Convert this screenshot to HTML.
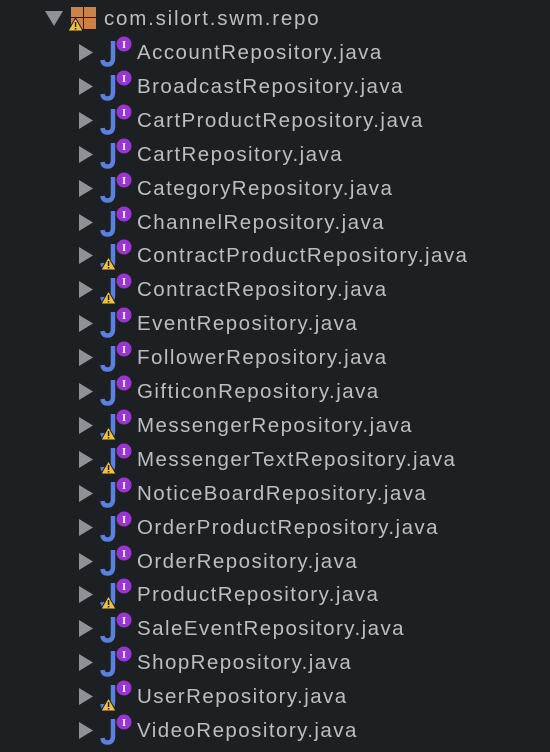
<!DOCTYPE html>
<html><head><style>
body{margin:0;width:550px;height:752px;background:#1d2023;overflow:hidden;font-family:"Liberation Sans",sans-serif;}
.r{position:absolute;left:0;height:34px;width:550px;}
.t{position:absolute;left:137px;top:6px;font-size:20.5px;color:#bcbec1;letter-spacing:1.45px;white-space:nowrap;}
svg{position:absolute;left:0;top:0;}
</style></head><body>
<div class="r" style="top:1px">
<svg width="140" height="34"><polygon points="45,10 63,10 54,25" fill="#8e9195"/>
<rect x="71" y="6" width="12" height="10" fill="#c8824a"/><rect x="84" y="6" width="12" height="10" fill="#c8824a"/>
<rect x="71" y="17" width="12" height="11" fill="#c8824a"/><rect x="84" y="17" width="12" height="11" fill="#c8824a"/>
<polygon points="75.5,17 83,30 68,30" fill="#f2c33a" stroke="#1d2023" stroke-width="1"/><rect x="74.8" y="21" width="1.5" height="5" fill="#1d2023"/><rect x="74.8" y="27" width="1.5" height="1.5" fill="#1d2023"/></svg>
<div class="t" style="left:104px;letter-spacing:1.8px">com.silort.swm.repo</div></div>
<div id="rows"></div>
<script>
var n=[["AccountRepository",0],["BroadcastRepository",0],["CartProductRepository",0],["CartRepository",0],["CategoryRepository",0],["ChannelRepository",0],["ContractProductRepository",1],["ContractRepository",1],["EventRepository",0],["FollowerRepository",0],["GifticonRepository",0],["MessengerRepository",1],["MessengerTextRepository",1],["NoticeBoardRepository",0],["OrderProductRepository",0],["OrderRepository",0],["ProductRepository",1],["SaleEventRepository",0],["ShopRepository",0],["UserRepository",1],["VideoRepository",0]];
var h="";
n.forEach(function(e,i){var top=35+i*33.9;
var w=e[1]?'<polygon points="108.5,19 116,32 101,32" fill="#f2c33a" stroke="#1d2023" stroke-width="1"/><rect x="107.8" y="23" width="1.5" height="5" fill="#1d2023"/><rect x="107.8" y="29" width="1.5" height="1.5" fill="#1d2023"/>':'';
h+='<div class="r" style="top:'+top+'px"><svg width="140" height="34"><polygon points="79,9 79,26 93,17.5" fill="#8e9195"/>'+
'<path d="M113 6 V23 Q113 29.5 107.5 29.5 Q103 29.5 102.5 25" fill="none" stroke="#5a80e2" stroke-width="4.5"/>'+w+
'<circle cx="124" cy="9" r="7.5" fill="#9a35d4"/><text x="124" y="13" font-size="10.5" font-family="Liberation Serif" font-weight="bold" fill="#fff" text-anchor="middle">I</text></svg>'+
'<div class="t">'+e[0]+'.java</div></div>';});
document.getElementById("rows").innerHTML=h;
</script>
</body></html>
